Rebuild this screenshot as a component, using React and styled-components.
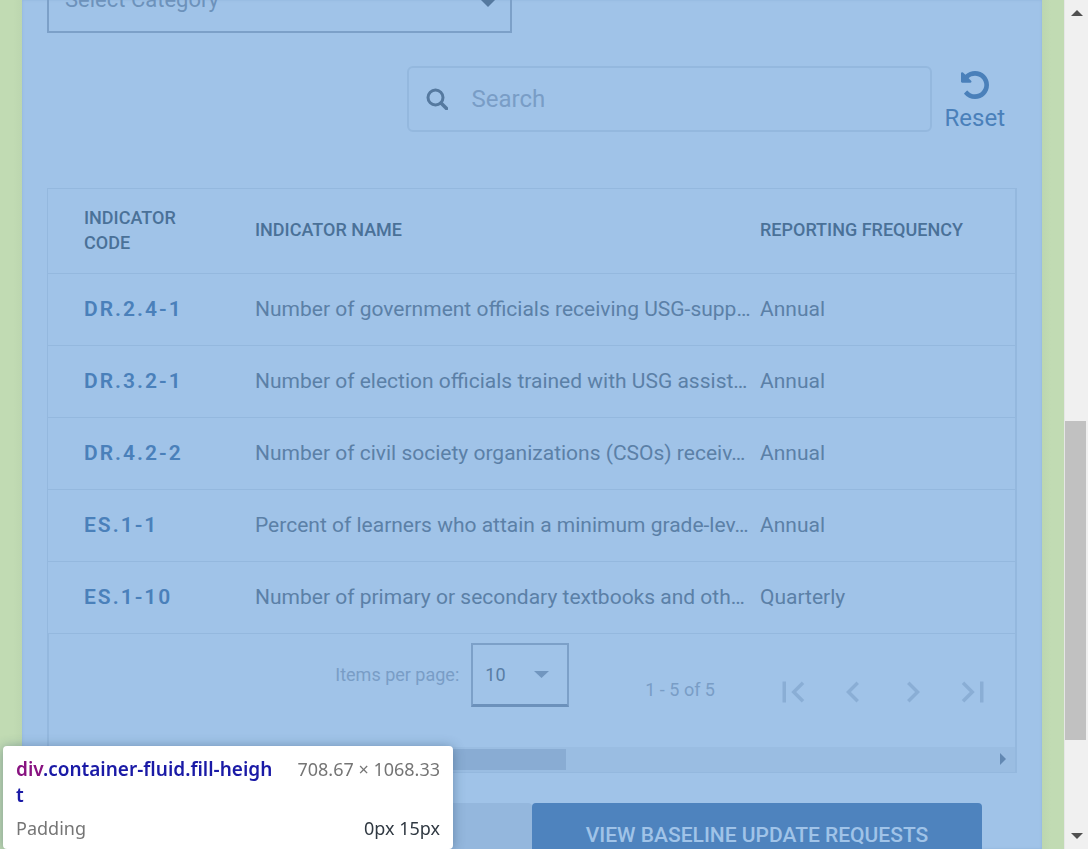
import React from "react";
import styled, { createGlobalStyle } from "styled-components";
import { MdFirstPage, MdChevronLeft, MdChevronRight, MdLastPage } from "react-icons/md";

const GlobalStyle = createGlobalStyle`
  *, *::before, *::after { box-sizing: border-box; }
  html, body { margin: 0; height: 100%; overflow: hidden; background: #a0c3e8; }
  #root { height: 100%; }
  body, button, input, select { font-family: Roboto, "Liberation Sans", sans-serif; }
`;

const Viewport = styled.div`
  display: flex;
  height: 100vh;
  overflow: hidden;
`;

const Gutter = styled.div`
  flex: 0 0 22px;
  background: linear-gradient(to ${(p) => p.$shade}, #c1dbb3 60%, #bcd6af);
`;

const Content = styled.main`
  flex: 1;
  min-width: 0;
  overflow: hidden;
  padding: 0 25px;
  background: #a0c3e8;
  box-shadow: inset 0 0 3px #8fb3db;
`;

const SelectBox = styled.div`
  position: relative;
  display: flex;
  align-items: center;
`;

const CategorySelect = styled.select`
  appearance: none;
  width: 100%;
  height: 68px;
  margin-top: -35px;
  padding: 0 16px;
  border: 2px solid #7ca0c8;
  border-radius: 0;
  background: transparent;
  color: #6d92bb;
  font-size: 22px;
`;

const CategoryField = styled.div`
  display: grid;
  grid-template-columns: 465px;
  > * { grid-area: 1 / 1; }
`;

const CategoryArrow = styled.svg`
  justify-self: end;
  margin-right: 15px;
  pointer-events: none;
`;

const Toolbar = styled.div`
  display: flex;
  justify-content: flex-end;
  gap: 13px;
  margin-top: 33px;
  padding-right: 12px;
`;

const SearchField = styled.label`
  display: flex;
  align-items: center;
  gap: 24px;
  flex: 0 1 525px;
  height: 66px;
  padding: 0 17px;
  border: 2px solid #94b8de;
  border-radius: 6px;
`;

const SearchInput = styled.input`
  flex: 1;
  min-width: 0;
  padding: 0;
  border: 0;
  outline: 0;
  background: transparent;
  font-size: 24px;
  &::placeholder { color: #799dc6; opacity: 1; }
`;

const ResetButton = styled.button`
  display: flex;
  flex-direction: column;
  align-items: center;
  gap: 5px;
  padding: 5px 0 0;
  border: 0;
  background: transparent;
  color: #4a80ba;
  font-size: 24px;
  line-height: 28px;
`;

const TableFrame = styled.section`
  margin-top: 56px;
  border: solid #94b8de;
  border-width: 1px 2px 1px 1px;
`;

const Table = styled.table`
  width: 100%;
  table-layout: fixed;
  border-collapse: collapse;
  th, td { text-align: left; border-bottom: 1px solid #94b8de; padding: 0; }
  th { padding-bottom: 2px; }
  th:first-child, td:first-child { padding-left: 36px; }
`;

const HeadCell = styled.th`
  width: ${(p) => p.$width || "auto"};
  height: 84px;
  color: #4a7198;
  font-size: 18px;
  font-weight: 500;
  line-height: 25px;
`;

const Cell = styled.td`
  height: 72px;
  white-space: nowrap;
  color: #5b80a7;
  font-size: 21px;
`;

const CodeLink = styled.a`
  color: #4a80ba;
  font-weight: 600;
  letter-spacing: 2px;
  text-decoration: none;
`;

const Pager = styled.div`
  display: flex;
  justify-content: flex-end;
  height: 113px;
  padding-right: 12px;
  border-left: 1px solid #94b8de;
  color: #799dc6;
  font-size: 18px;
`;

const PageSize = styled.label`
  display: flex;
  align-items: center;
  gap: 12px;
  height: 64px;
  margin-top: 9px;
`;

const PageSelect = styled.select`
  appearance: none;
  width: 98px;
  height: 64px;
  padding: 0 12px;
  border: 2px solid #7ca0c8;
  border-bottom: 3px solid #6c91bb;
  border-radius: 0;
  background: transparent;
  color: #587da5;
  font-size: 18px;
`;

const PageArrow = styled.svg`
  position: absolute;
  right: 20px;
  pointer-events: none;
`;

const Range = styled.span`
  margin: 45px 48px 0 76px;
  line-height: 21px;
`;

const PageButton = styled.button`
  display: flex;
  align-items: center;
  justify-content: center;
  width: 60px;
  height: 60px;
  margin-top: 28px;
  padding: 0;
  border: 0;
  background: transparent;
  color: #8aaed5;
`;

const ScrollTrack = styled.div`
  display: flex;
  align-items: center;
  justify-content: space-between;
  height: 25px;
  padding-right: 9px;
  background: #9abde2;
`;

const ScrollThumb = styled.div`
  width: 494px;
  height: 21px;
  margin-left: 24px;
  background: #89acd3;
`;

const Actions = styled.div`
  display: grid;
  grid-template-columns: 450px 450px;
  justify-content: end;
  margin-top: 30px;
  padding-right: 35px;
`;

const ActionButton = styled.button`
  height: 64px;
  border: 0;
  border-radius: 4px;
  background: ${(p) => (p.$primary ? "#4e83be" : "#94b7dd")};
  color: ${(p) => (p.$primary ? "#a0c3e8" : "#4e83be")};
  font-size: 21px;
  font-weight: 500;
`;

const PageScroll = styled.div`
  display: flex;
  flex-direction: column;
  align-items: center;
  flex: 0 0 24px;
  padding: 10px 0;
  border-left: 1px solid #e6e6e6;
  background: #f0f0f0;
`;

const PageTrack = styled.div`
  flex: 1;
  align-self: stretch;
  padding-top: 405px;
`;

const PageThumb = styled.div`
  width: 21px;
  height: 319px;
  background: #c1c1c1;
`;

const Tooltip = styled.aside`
  position: fixed;
  left: 3px;
  bottom: 0;
  width: 450px;
  height: 103px;
  padding: 10px 13px;
  border-radius: 4px;
  background: #fff;
  box-shadow: 0 1px 12px rgba(40, 70, 100, 0.45);
  font-family: "Noto Sans", "Open Sans", sans-serif;
  font-size: 18px;
  line-height: 26px;
`;

const TipRow = styled.div`
  display: flex;
  justify-content: space-between;
  gap: 21px;
  margin-bottom: 7px;
  color: ${(p) => (p.$dark ? "#303942" : "#757575")};
`;

const Selector = styled.strong`
  flex: 1;
  min-width: 0;
  word-break: break-all;
  color: #1a1aa6;
  font-size: 19px;
  font-weight: 600;
`;

const TagName = styled.span`
  color: #881280;
`;

const Muted = styled.span`
  color: #757575;
`;

const rows = [
  ["DR.2.4-1", "Number of government officials receiving USG-supp…", "Annual"],
  ["DR.3.2-1", "Number of election officials trained with USG assist…", "Annual"],
  ["DR.4.2-2", "Number of civil society organizations (CSOs) receiv…", "Annual"],
  ["ES.1-1", "Percent of learners who attain a minimum grade-lev…", "Annual"],
  ["ES.1-10", "Number of primary or secondary textbooks and oth…", "Quarterly"],
];

const pageButtons = [
  ["First page", MdFirstPage],
  ["Previous page", MdChevronLeft],
  ["Next page", MdChevronRight],
  ["Last page", MdLastPage],
];

export default function App() {
  return (
    <>
      <GlobalStyle />
      <Viewport>
        <Gutter $shade="right" />
        <Content>
          <CategoryField>
            <CategorySelect aria-label="Category">
              <option>Select Category</option>
            </CategorySelect>
            <CategoryArrow width="18" height="7" viewBox="0 0 18 7" aria-hidden="true">
              <path d="M2 0h14L9 7z" fill="#55799f" />
            </CategoryArrow>
          </CategoryField>

          <Toolbar>
            <SearchField>
              <svg width="22" height="22" viewBox="0 0 22 22" fill="none" stroke="#55799f" strokeWidth="3" aria-hidden="true">
                <circle cx="9.5" cy="9.5" r="7.5" />
                <path d="M15 15l5.5 5.5" strokeWidth="3.5" strokeLinecap="round" />
              </svg>
              <SearchInput type="search" placeholder="Search" aria-label="Search" />
            </SearchField>
            <ResetButton type="button">
              <svg width="28" height="28" viewBox="128 128 1536 1536" fill="currentColor" aria-hidden="true">
                <path d="M1664 896q0 156-61 298t-164 245-245 164-298 61q-172 0-327-72.5t-264-204.5q-7-10-6.5-22.5t8.5-20.5l137-138q10-9 25-9 16 2 23 12 73 95 179 147t225 52q104 0 198.5-40.5t163.5-109.5 109.5-163.5 40.5-198.5-40.5-198.5-109.5-163.5-163.5-109.5-198.5-40.5q-98 0-188 35.5t-160 101.5l137 138q31 30 14 69-17 40-59 40h-448q-26 0-45-19t-19-45v-448q0-42 40-59 39-17 69 14l130 129q107-101 244.5-156.5t284.5-55.5q156 0 298 61t245 164 164 245 61 298z" />
              </svg>
              Reset
            </ResetButton>
          </Toolbar>

          <TableFrame>
            <Table>
              <thead>
                <tr>
                  <HeadCell $width="207px">INDICATOR<br />CODE</HeadCell>
                  <HeadCell>INDICATOR NAME</HeadCell>
                  <HeadCell $width="255px">REPORTING FREQUENCY</HeadCell>
                </tr>
              </thead>
              <tbody>
                {rows.map(([code, name, frequency]) => (
                  <tr key={code}>
                    <Cell><CodeLink href="#">{code}</CodeLink></Cell>
                    <Cell>{name}</Cell>
                    <Cell>{frequency}</Cell>
                  </tr>
                ))}
              </tbody>
            </Table>
            <Pager>
              <PageSize>
                Items per page:
                <SelectBox>
                  <PageSelect>
                    <option>10</option>
                  </PageSelect>
                  <PageArrow width="15" height="7" viewBox="0 0 15 7" aria-hidden="true">
                    <path d="M0 0h15L7.5 7z" fill="#7196bf" />
                  </PageArrow>
                </SelectBox>
              </PageSize>
              <Range>1 - 5 of 5</Range>
              {pageButtons.map(([label, Icon]) => (
                <PageButton key={label} type="button" aria-label={label}>
                  <Icon size={42} />
                </PageButton>
              ))}
            </Pager>
            <ScrollTrack>
              <ScrollThumb />
              <svg width="6" height="12" viewBox="0 0 6 12" aria-hidden="true">
                <path d="M0 0l6 6-6 6z" fill="#6288b2" />
              </svg>
            </ScrollTrack>
          </TableFrame>

          <Actions>
            <ActionButton type="button" aria-label="Back" />
            <ActionButton type="button" $primary>VIEW BASELINE UPDATE REQUESTS</ActionButton>
          </Actions>
        </Content>
        <Gutter $shade="left" />
        <PageScroll>
          <svg width="12" height="6" viewBox="0 0 12 6" aria-hidden="true"><path d="M0 6l6-6 6 6z" fill="#505050" /></svg>
          <PageTrack>
            <PageThumb />
          </PageTrack>
          <svg width="12" height="6" viewBox="0 0 12 6" aria-hidden="true"><path d="M0 0l6 6 6-6z" fill="#505050" /></svg>
        </PageScroll>
      </Viewport>
      <Tooltip>
        <TipRow>
          <Selector><TagName>div</TagName>.container-fluid.fill-height</Selector>
          <span>708.67 × 1068.33</span>
        </TipRow>
        <TipRow $dark>
          <Muted>Padding</Muted>
          <span>0px 15px</span>
        </TipRow>
      </Tooltip>
    </>
  );
}
